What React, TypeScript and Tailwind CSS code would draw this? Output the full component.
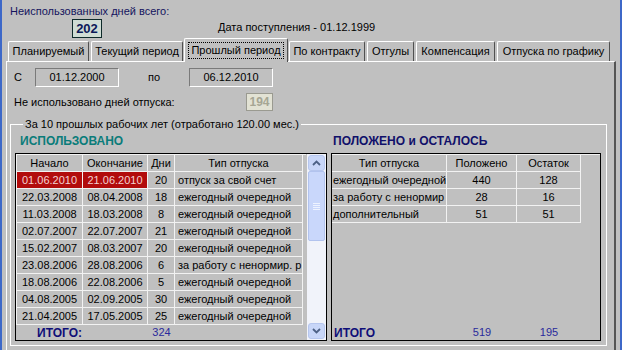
import React from "react";

type Tab = { label: string; cls: string; active?: boolean };

const TABS: Tab[] = [
  { label: "Планируемый", cls: "ml-[6px] w-[81px]" },
  { label: "Текущий период", cls: "ml-[2px] w-[92px]" },
  { label: "Прошлый период", cls: "ml-[1px] w-[104px]", active: true },
  { label: "По контракту", cls: "ml-[1px] w-[76px]" },
  { label: "Отгулы", cls: "ml-[2px] w-[47px]" },
  { label: "Компенсация", cls: "ml-[2px] w-[79px]" },
  { label: "Отпуска по графику", cls: "ml-[2px] w-[113px]" },
];

const USED: [string, string, string, string][] = [
  ["01.06.2010", "21.06.2010", "20", "отпуск за свой счет"],
  ["22.03.2008", "08.04.2008", "18", "ежегодный очередной"],
  ["11.03.2008", "18.03.2008", "8", "ежегодный очередной"],
  ["02.07.2007", "22.07.2007", "21", "ежегодный очередной"],
  ["15.02.2007", "08.03.2007", "20", "ежегодный очередной"],
  ["23.08.2006", "28.08.2006", "6", "за работу с ненормир. р"],
  ["18.08.2006", "22.08.2006", "5", "ежегодный очередной"],
  ["04.08.2005", "02.09.2005", "30", "ежегодный очередной"],
  ["21.04.2005", "17.05.2005", "25", "ежегодный очередной"],
];

const LEFT: [string, string, string][] = [
  ["ежегодный очередной", "440", "128"],
  ["за работу с ненормир", "28", "16"],
  ["дополнительный", "51", "51"],
];

const cell = "h-[17px] border-r border-b border-[#f2f2f2] whitespace-nowrap overflow-hidden leading-[16px]";

function Chevron({ up }: { up?: boolean }) {
  return (
    <svg width="9" height="6" viewBox="0 0 9 6">
      <path
        d={up ? "M1 5 L4.5 1.5 L8 5" : "M1 1 L4.5 4.5 L8 1"}
        fill="none"
        stroke="#4d6185"
        strokeWidth="1.8"
      />
    </svg>
  );
}

function ScrollBtn({ up }: { up?: boolean }) {
  return (
    <div className="h-[16px] mx-[1px] rounded-[3px] border border-[#b6c6ee] bg-[#c8d6f8] flex items-center justify-center">
      <Chevron up={up} />
    </div>
  );
}

export default function App() {
  return (
    <div className="w-[622px] h-[350px] overflow-hidden bg-[#c0c0c0] flex font-['Liberation_Sans',Arial,sans-serif] text-[11px] text-black">
      <div className="w-[2px] shrink-0 bg-[#3d68c8]" />
      <div className="w-[618px] shrink-0 flex flex-col">
        {/* header */}
        <div className="h-[19px] pt-[4px] pl-[8px] leading-[14px] text-[#14145e]">
          Неиспользованных дней всего:
        </div>
        <div className="h-[19px] flex items-start">
          <div className="ml-[70px] w-[30px] h-[19px] border border-[#0e2a2a] bg-[#d0ddd5] flex items-center justify-center font-bold text-[13px] text-[#0c1a5a]">
            202
          </div>
          <div className="ml-[116px] mt-[1px] leading-[14px]">Дата поступления - 01.12.1999</div>
        </div>

        {/* tabs */}
        <div className="h-[23px] flex items-end">
          {TABS.map((t) =>
            t.active ? (
              <div
                key={t.label}
                className={`${t.cls} h-[24px] -mb-[1px] relative z-10 bg-[#c0c0c0] border-t border-l border-white border-r border-r-[#505050] rounded-t-[2px] flex items-center justify-center`}
              >
                <span className="px-[2px] leading-[15px] outline-1 outline-dotted outline-black">{t.label}</span>
              </div>
            ) : (
              <div
                key={t.label}
                className={`${t.cls} h-[20px] border-t border-l border-white border-r border-r-[#505050] rounded-t-[2px] flex items-center justify-center`}
              >
                {t.label}
              </div>
            )
          )}
        </div>

        {/* panel */}
        <div className="ml-[4px] w-[610px] flex-1 border-t border-l border-white border-r-2 border-r-[#555555]">
          <div className="mt-[6px] h-[19px] flex items-center">
            <span className="w-[28px] pl-[7px]">С</span>
            <div className="w-[84px] h-[19px] border-t border-l border-[#7a7a7a] border-b border-r border-b-white border-r-white flex items-center justify-center">
              01.12.2000
            </div>
            <span className="w-[70px] pl-[29px]">по</span>
            <div className="w-[84px] h-[19px] border-t border-l border-[#7a7a7a] border-b border-r border-b-white border-r-white flex items-center justify-center">
              06.12.2010
            </div>
          </div>
          <div className="mt-[6px] h-[18px] flex items-center">
            <span className="w-[239px] pl-[7px]">Не использовано дней отпуска:</span>
            <div className="w-[27px] h-[18px] border border-[#9a9a90] bg-[#e2e2d4] flex items-center justify-center font-bold text-[12px] text-[#a6a694]">
              194
            </div>
          </div>

          <fieldset className="mt-[6px] ml-[3px] w-[597px] border border-white px-[4px] pb-[4px]">
            <legend className="ml-[8px] px-[2px] leading-[14px]">
              За 10 прошлых рабочих лет (отработано 120.00 мес.)
            </legend>
            <div className="flex">
              {/* used */}
              <div className="w-[312px] flex flex-col">
                <div className="mt-[3px] h-[14px] pl-[5px] leading-[14px] font-bold text-[12px] text-[#0a7c7a]">
                  ИСПОЛЬЗОВАНО
                </div>
                <div className="mt-[5px] h-[188px] border border-black flex">
                  <div className="w-[290px] flex flex-col">
                    <div className="flex border-t border-[#f2f2f2]">
                      <div className={`${cell} w-[67px] border-l text-center`}>Начало</div>
                      <div className={`${cell} w-[65px] text-center`}>Окончание</div>
                      <div className={`${cell} w-[27px] text-center`}>Дни</div>
                      <div className={`${cell} w-[128px] text-center`}>Тип отпуска</div>
                    </div>
                    {USED.map((r, i) => (
                      <div key={i} className="flex">
                        <div className={`${cell} w-[67px] border-l text-center ${i === 0 ? "bg-[#b20c0c] text-[#f2d2d2]" : ""}`}>{r[0]}</div>
                        <div className={`${cell} w-[65px] text-center ${i === 0 ? "bg-[#b20c0c] text-[#f2d2d2]" : ""}`}>{r[1]}</div>
                        <div className={`${cell} w-[27px] text-center`}>{r[2]}</div>
                        <div className={`${cell} w-[128px] pl-[3px]`}>{r[3]}</div>
                      </div>
                    ))}
                    <div className="h-[15px] flex items-center">
                      <div className="w-[67px] pl-[21px] font-bold text-[12px] text-[#0e0e78]">ИТОГО:</div>
                      <div className="w-[92px] pl-[65px] text-center text-[#2a2a9c]">324</div>
                    </div>
                  </div>
                  <div className="ml-[1px] w-[19px] bg-[#f1f3fa] flex flex-col py-[1px]">
                    <ScrollBtn up />
                    <div className="mx-[1px] h-[70px] rounded-[2px] border border-[#b2c3ee] bg-[#c9d7fb] flex flex-col items-center justify-center gap-[1px]">
                      <div className="w-[7px] h-[1px] bg-[#eef3ff]" />
                      <div className="w-[7px] h-[1px] bg-[#eef3ff]" />
                      <div className="w-[7px] h-[1px] bg-[#eef3ff]" />
                      <div className="w-[7px] h-[1px] bg-[#eef3ff]" />
                    </div>
                    <div className="flex-1" />
                    <ScrollBtn />
                  </div>
                </div>
              </div>

              {/* entitled */}
              <div className="ml-[4px] w-[270px] flex flex-col">
                <div className="mt-[3px] h-[14px] pl-[2px] leading-[14px] font-bold text-[12px] text-[#10106a]">
                  ПОЛОЖЕНО и ОСТАЛОСЬ
                </div>
                <div className="mt-[5px] h-[188px] border border-black flex flex-col">
                  <div className="flex border-t border-[#f2f2f2]">
                    <div className={`${cell} w-[115px] text-center`}>Тип отпуска</div>
                    <div className={`${cell} w-[70px] text-center`}>Положено</div>
                    <div className={`${cell} w-[64px] text-center`}>Остаток</div>
                  </div>
                  {LEFT.map((r, i) => (
                    <div key={i} className="flex">
                      <div className={`${cell} w-[115px] pl-[1px]`}>{r[0]}</div>
                      <div className={`${cell} w-[70px] text-center`}>{r[1]}</div>
                      <div className={`${cell} w-[64px] text-center`}>{r[2]}</div>
                    </div>
                  ))}
                  <div className="flex-1" />
                  <div className="h-[15px] flex items-center">
                    <div className="w-[115px] pl-[2px] font-bold text-[12px] text-[#0e0e78]">ИТОГО</div>
                    <div className="w-[70px] text-center text-[#2a2a9c]">519</div>
                    <div className="w-[64px] text-center text-[#2a2a9c]">195</div>
                  </div>
                </div>
              </div>
            </div>
          </fieldset>
        </div>
      </div>
      <div className="w-[2px] shrink-0 bg-[#3d68c8]" />
    </div>
  );
}
